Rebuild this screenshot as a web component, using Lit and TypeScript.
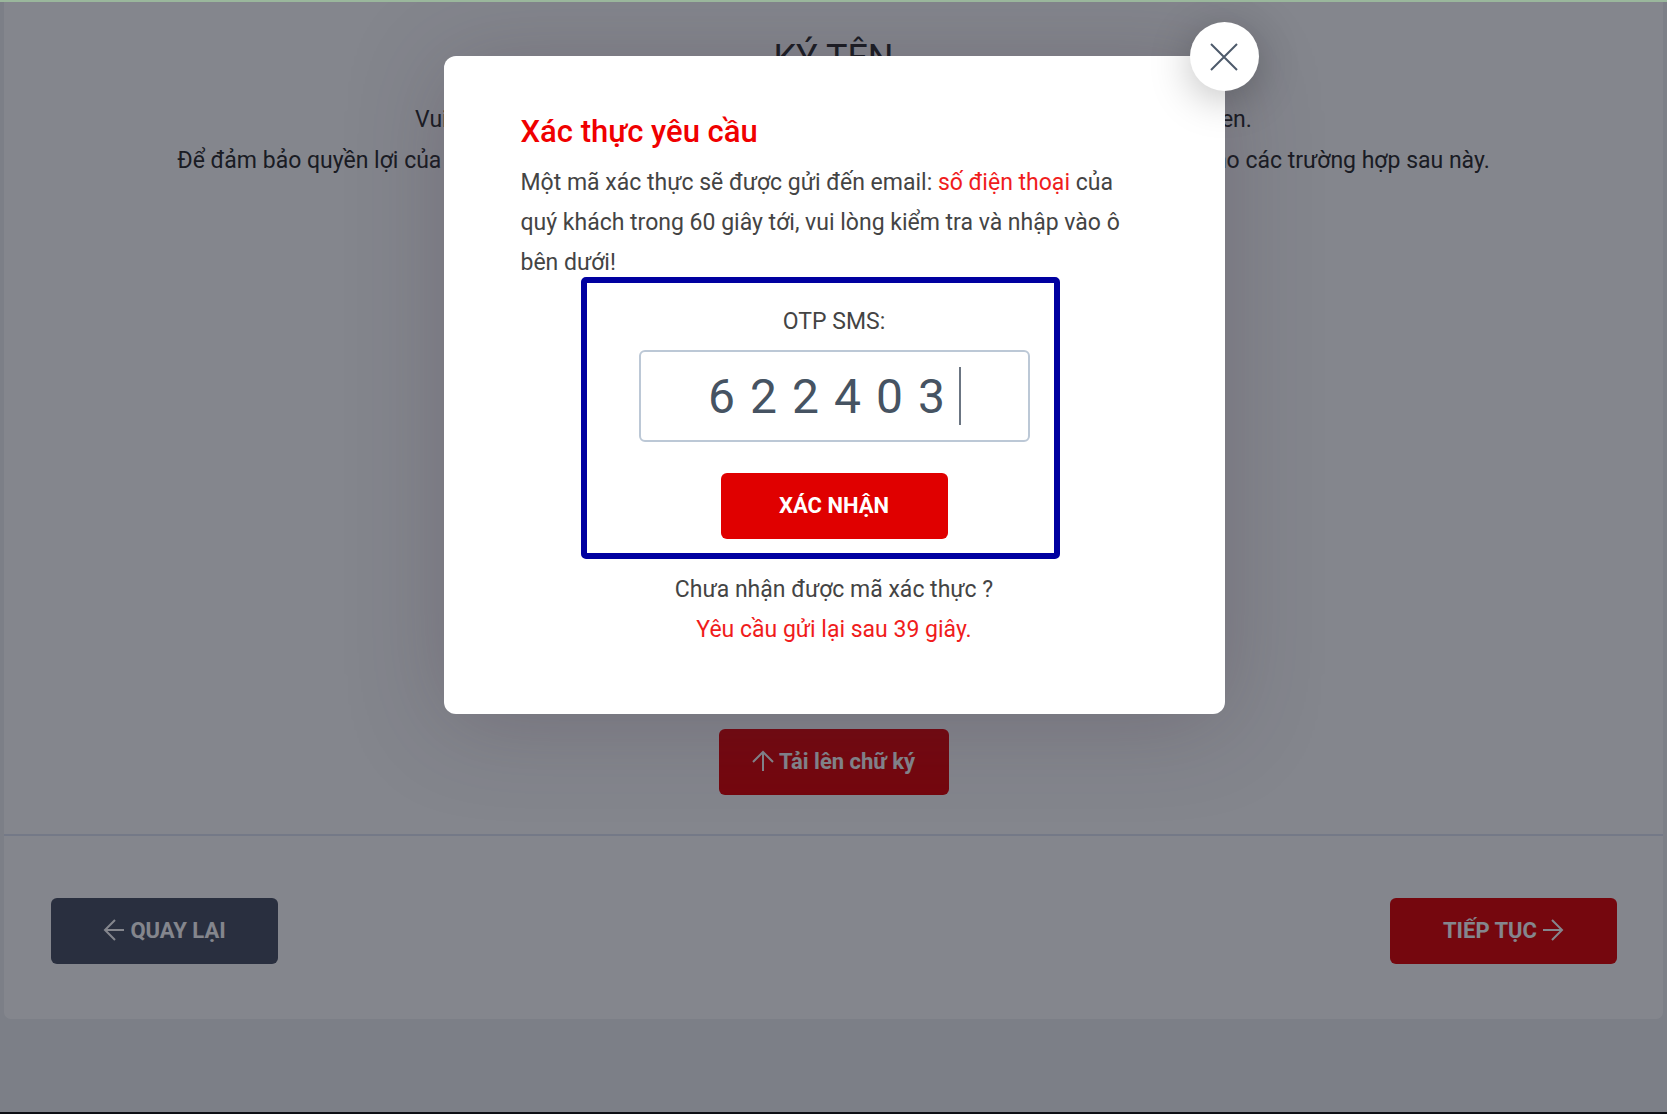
import { LitElement, html, css, svg } from "lit";
import { customElement, property, state } from "lit/decorators.js";

const arrows: Record<string, unknown> = {
  up: svg`<path d="M11 21V2M1 12L11 2L21 12" />`,
  left: svg`<path d="M21 11H2M12 1L2 11L12 21" />`,
  right: svg`<path d="M1 11H20M10 1L20 11L10 21" />`,
};

@customElement("arrow-icon")
export class ArrowIcon extends LitElement {
  @property() direction = "right";

  static styles = css`
    :host {
      display: inline-flex;
    }
    .icon {
      width: 22px;
      height: 22px;
      fill: none;
      stroke: currentColor;
      stroke-width: 2;
    }
  `;

  render() {
    return html`<svg class="icon" viewBox="0 0 22 22" aria-hidden="true">${arrows[this.direction]}</svg>`;
  }
}

@customElement("otp-dialog")
export class OtpDialog extends LitElement {
  @state() private code = "622403";
  @state() private seconds = 39;

  static styles = css`
    :host {
      display: block;
      width: 781px;
      max-width: 100%;
    }
    * {
      box-sizing: border-box;
    }
    .dialog {
      position: relative;
      display: flex;
      flex-direction: column;
      padding: 52px 77px 64px;
      border-radius: 12px;
      background: #fff;
      box-shadow: 0 8px 96px rgba(60, 45, 65, 0.25);
      color: #444;
      font-size: 23px;
      line-height: 40px;
    }
    .close {
      position: absolute;
      top: -34px;
      right: -34px;
      display: flex;
      align-items: center;
      justify-content: center;
      width: 69px;
      height: 69px;
      padding: 0;
      border: 0;
      border-radius: 50%;
      background: #fff;
      box-shadow: 0 8px 40px rgba(0, 0, 0, 0.25);
      cursor: pointer;
    }
    .cross {
      width: 28px;
      height: 28px;
      fill: none;
      stroke: #4d5a6b;
      stroke-width: 2;
    }
    .title {
      margin: 0 0 7px;
      color: #f00000;
      font-size: 31px;
      font-weight: 500;
      line-height: 48px;
    }
    .message {
      margin: 0 0 19px;
    }
    .accent {
      color: #f01c1c;
    }
    .form {
      position: relative;
      display: flex;
      flex-direction: column;
      align-items: center;
      margin: 0;
    }
    .highlight {
      position: absolute;
      inset: -25px 88px -20px 60px;
      border: 6px solid #0000a0;
      border-radius: 5px;
      pointer-events: none;
    }
    .label {
      margin-bottom: 8px;
    }
    .field {
      position: relative;
      width: 391px;
      max-width: 100%;
      margin-bottom: 31px;
    }
    .code {
      display: block;
      width: 100%;
      height: 92px;
      padding: 0;
      border: 2px solid #bcc8d6;
      border-radius: 6px;
      outline: none;
      background: #fff;
      color: #465362;
      caret-color: transparent;
      font: 400 48px Roboto, sans-serif;
      letter-spacing: 15px;
      text-align: center;
    }
    .caret {
      position: absolute;
      top: 17px;
      left: calc(50% + 125px);
      width: 2px;
      height: 58px;
      background: #6b7582;
    }
    .submit {
      width: 227px;
      height: 66px;
      padding: 0 0 2px;
      border: 0;
      border-radius: 6px;
      background: #e00000;
      color: #fff;
      font: 700 22px Roboto, sans-serif;
      cursor: pointer;
    }
    .resend {
      margin: 31px 0 0;
      text-align: center;
    }
    .line {
      display: block;
    }
  `;

  render() {
    return html`
      <section class="dialog" role="dialog" aria-modal="true" aria-labelledby="title">
        <button class="close" type="button" aria-label="Đóng">
          <svg class="cross" viewBox="0 0 28 28" aria-hidden="true"><path d="M1 1L27 27M27 1L1 27" /></svg>
        </button>
        <h2 class="title" id="title">Xác thực yêu cầu</h2>
        <p class="message">
          Một mã xác thực sẽ được gửi đến email: <span class="accent">số điện thoại</span> của<br />quý khách
          trong 60 giây tới, vui lòng kiểm tra và nhập vào ô<br />bên dưới!
        </p>
        <form class="form" @submit=${(e: Event) => e.preventDefault()}>
          <label class="label" for="otp">OTP SMS:</label>
          <div class="field">
            <input
              class="code"
              id="otp"
              type="text"
              inputmode="numeric"
              maxlength="6"
              autocomplete="one-time-code"
              .value=${this.code}
              @input=${(e: Event) => (this.code = (e.target as HTMLInputElement).value)}
            />
            <span class="caret"></span>
          </div>
          <button class="submit" type="submit">XÁC NHẬN</button>
          <div class="highlight"></div>
        </form>
        <p class="resend">
          <span class="line">Chưa nhận được mã xác thực ?</span>
          <span class="line accent">Yêu cầu gửi lại sau ${this.seconds} giây.</span>
        </p>
      </section>
    `;
  }
}

@customElement("app-root")
export class AppRoot extends LitElement {
  static styles = css`
    :host {
      display: block;
      font-family: Roboto, sans-serif;
    }
    * {
      box-sizing: border-box;
    }
    .screen {
      position: relative;
      display: flex;
      flex-direction: column;
      min-height: 100vh;
      padding: 0 4px 93px;
      border-top: 2px solid #9ab79c;
      border-bottom: 2px solid #0c0e14;
      background: #eef0f2;
      color: #2a2a2a;
    }
    .card {
      flex: 1;
      display: flex;
      flex-direction: column;
      border-radius: 0 0 7px 7px;
      background: #fff;
    }
    .signature {
      flex: 1;
      display: flex;
      flex-direction: column;
      align-items: center;
      padding: 32px 46px 39px;
      border-bottom: 2px solid #dfe5f2;
      text-align: center;
    }
    .heading {
      margin: 0 0 17px;
      font-size: 36px;
      font-weight: 400;
      line-height: 48px;
    }
    .intro {
      margin: 0;
      font-size: 23px;
      line-height: 41px;
    }
    .line {
      display: block;
    }
    .pad {
      flex: 1;
    }
    .actions {
      display: flex;
      justify-content: space-between;
      padding: 62px 46px 55px 47px;
    }
    .button {
      display: flex;
      align-items: center;
      justify-content: center;
      gap: 5px;
      width: 227px;
      height: 66px;
      padding: 0 0 2px;
      border: 0;
      border-radius: 6px;
      background: #e00000;
      color: #fff;
      font: 700 22px Roboto, sans-serif;
      cursor: pointer;
    }
    .upload {
      width: 230px;
    }
    .back {
      background: #485062;
    }
    .overlay {
      position: absolute;
      inset: 0;
      display: flex;
      align-items: flex-start;
      justify-content: center;
      padding: 54px 0 0 1px;
      overflow: hidden;
      background: rgba(10, 14, 28, 0.5);
    }
  `;

  render() {
    return html`
      <div class="screen">
        <main class="card">
          <section class="signature">
            <h1 class="heading">KÝ TÊN</h1>
            <p class="intro">
              <span class="line">Vui lòng ký tên vào giấy trắng, chụp và tải lên chữ ký bằng bút mực xanh hoặc đen.</span>
              <span class="line">Để đảm bảo quyền lợi của Quý khách, vui lòng sử dụng chữ ký này thống nhất cho hồ sơ và giao dịch cho các trường hợp sau này.</span>
            </p>
            <div class="pad"></div>
            <button class="button upload" type="button">
              <arrow-icon direction="up"></arrow-icon>Tải lên chữ ký
            </button>
          </section>
          <nav class="actions">
            <button class="button back" type="button"><arrow-icon direction="left"></arrow-icon>QUAY LẠI</button>
            <button class="button" type="button">TIẾP TỤC<arrow-icon direction="right"></arrow-icon></button>
          </nav>
        </main>
        <div class="overlay"><otp-dialog></otp-dialog></div>
      </div>
    `;
  }
}
